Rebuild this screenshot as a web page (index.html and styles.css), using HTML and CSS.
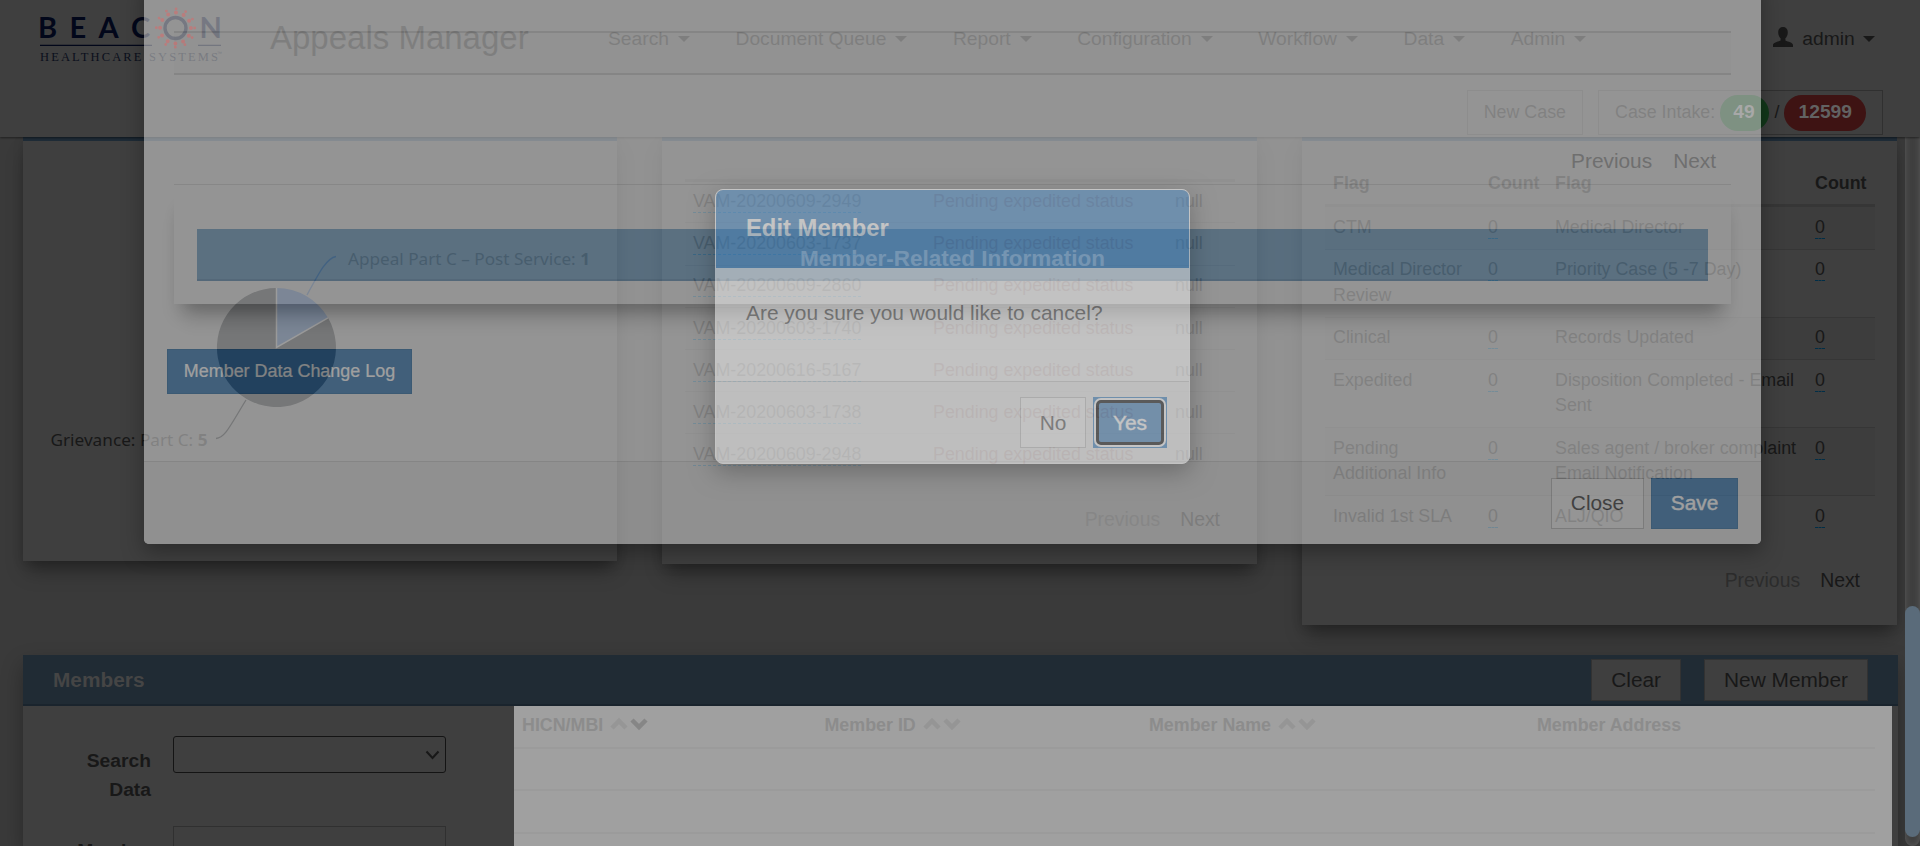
FILE: index.html
```html
<!DOCTYPE html>
<html lang="en">
<head>
<meta charset="utf-8">
<title>Appeals Manager</title>
<link rel="stylesheet" href="styles.css">
</head>
<body>
<div class="page">
  <header class="top">
    <div class="navrow">
      <svg class="logo" width="190" height="60" viewBox="36 4 190 60">
        <g class="logo-word"><text x="38 69.5 98.5 131 199.5" y="38">BEACN</text></g>
        <circle cx="175.5" cy="28" r="10.5" fill="none" stroke="#02071a" stroke-width="3.4"/>
        <g fill="none" stroke="#8a1010" stroke-linecap="round">
          <circle cx="175.5" cy="28" r="15.4" stroke-width="4" stroke-dasharray="0 8.063"/>
          <circle cx="175.5" cy="28" r="19.2" stroke-width="2.8" stroke-dasharray="0 10.053"/>
        </g>
        <path d="M40 45.3H152M198 45.3H221" stroke="#02071a" stroke-width="1.2"/>
        <text class="logo-sub" x="40" y="61" textLength="178">HEALTHCARE SYSTEMS</text>
        <text class="logo-tm" x="217" y="55">™</text>
      </svg>
      <div class="brand">Appeals Manager</div>
      <nav class="menu">
        <a>Search<i class="caret"></i></a><a>Document Queue<i class="caret"></i></a><a>Report<i class="caret"></i></a><a>Configuration<i class="caret"></i></a><a>Workflow<i class="caret"></i></a><a>Data<i class="caret"></i></a><a>Admin<i class="caret"></i></a>
      </nav>
      <a class="user"><svg width="20" height="20" viewBox="0 0 20 20"><path d="M10 0C7 0 5.2 2 5.2 5.300 5.200 8 6.200 10 7.600 11.300V13.500C5 14.800 0 15.500 0 18V20H20V18C20 15.500 15 14.800 12.400 13.500V11.300C13.800 10 14.800 8 14.800 5.300 14.800 2 13 0 10 0Z" fill="#181818"/></svg>admin<i class="caret"></i></a>
    </div>
    <div class="actions">
      <div class="box">New Case</div>
      <div class="box intake">Case Intake: <b class="pill green">49</b> <span>/</span> <b class="pill red">12599</b></div>
    </div>
  </header>

  <main class="cards">
    <section class="card c1">
      <svg width="594" height="400" viewBox="23 141 594 400">
        <path d="M276.500 347.500V288A59.500 59.500 0 0 1 328 317.800Z" fill="#0e2342"/>
        <path d="M276.500 347.500L328 317.800A59.500 59.500 0 1 1 276.500 288Z" fill="#020406"/>
        <path d="M276.500 288V347.500L328 317.800" fill="none" stroke="#4c4c4c" stroke-width="1.500"/>
        <path d="M336 256.500C327 258 320 271 307 295" fill="none" stroke="#0e2342" stroke-width="1.300"/>
        <path d="M216 438.500C225 438 230 426 246 400" fill="none" stroke="#020406" stroke-width="1.300"/>
        <text class="pl" x="348" y="265" textLength="242" lengthAdjust="spacingAndGlyphs">Appeal Part C – Post Service: <tspan font-weight="700">1</tspan></text>
        <text class="pl" x="50.500" y="446" textLength="157" lengthAdjust="spacingAndGlyphs">Grievance: Part C: <tspan font-weight="700">5</tspan></text>
      </svg>
    </section>
    <section class="card c2">
      <table class="cases">
        <tr><td><u>VAM-20200609-2949</u></td><td class="rd">Pending expedited status</td><td>null</td></tr>
        <tr><td><u>VAM-20200603-1737</u></td><td class="rd">Pending expedited status</td><td>null</td></tr>
        <tr><td><u>VAM-20200609-2860</u></td><td class="rd">Pending expedited status</td><td>null</td></tr>
        <tr><td><u>VAM-20200603-1740</u></td><td class="rd">Pending expedited status</td><td>null</td></tr>
        <tr><td><u>VAM-20200616-5167</u></td><td class="rd">Pending expedited status</td><td>null</td></tr>
        <tr><td><u>VAM-20200603-1738</u></td><td class="rd">Pending expedited status</td><td>null</td></tr>
        <tr><td><u>VAM-20200609-2948</u></td><td class="rd">Pending expedited status</td><td>null</td></tr>
      </table>
      <div class="pager"><span class="off">Previous</span><span>Next</span></div>
    </section>
    <section class="card c3">
      <table class="flags">
        <tr><th>Flag</th><th>Count</th><th>Flag</th><th>Count</th></tr>
        <tr><td>CTM</td><td><u>0</u></td><td>Medical Director</td><td><u>0</u></td></tr>
        <tr><td>Medical Director Review</td><td><u>0</u></td><td>Priority Case (5 -7 Day)</td><td><u>0</u></td></tr>
        <tr><td>Clinical</td><td><u>0</u></td><td>Records Updated</td><td><u>0</u></td></tr>
        <tr><td>Expedited</td><td><u>0</u></td><td>Disposition Completed - Email Sent</td><td><u>0</u></td></tr>
        <tr><td>Pending Additional Info</td><td><u>0</u></td><td>Sales agent / broker complaint Email Notification</td><td><u>0</u></td></tr>
        <tr><td>Invalid 1st SLA</td><td><u>0</u></td><td>ALJ/QIO</td><td><u>0</u></td></tr>
      </table>
      <div class="pager"><span class="off">Previous</span><span>Next</span></div>
    </section>
  </main>

  <section class="members">
    <div class="mhead"><h2>Members</h2><div class="btn">Clear</div><div class="btn">New Member</div></div>
    <div class="mbody">
      <div class="form">
        <label>Search Data</label>
        <div class="select"><svg width="15" height="10" viewBox="0 0 15 10"><path d="M1.500 1.500L7.500 8L13.500 1.500" fill="none" stroke="#181818" stroke-width="2"/></svg></div>
        <label>Member</label>
        <div class="input"></div>
      </div>
      <div class="grid">
        <div class="gr gh">
          <b>HICN/MBI <svg width="38" height="16" viewBox="0 0 38 16"><path d="M2 12L9 5L16 12" stroke="#969696"/><path d="M22 4L29 11L36 4" stroke="#868686"/></svg></b>
          <b>Member ID <svg width="38" height="16" viewBox="0 0 38 16"><path d="M2 12L9 5L16 12M22 4L29 11L36 4" stroke="#959595"/></svg></b>
          <b>Member Name <svg width="38" height="16" viewBox="0 0 38 16"><path d="M2 12L9 5L16 12M22 4L29 11L36 4" stroke="#959595"/></svg></b>
          <b>Member Address</b>
        </div>
        <div class="gr"></div><div class="gr"></div><div class="gr"></div>
      </div>
    </div>
  </section>
</div>

<div class="scroll"><div class="thumb"></div></div>

<div class="modal">
  <div class="mhd"></div>
  <div class="pager2"><span>Previous</span><span>Next</span></div>
  <div class="panel"><div class="bar">Member-Related Information</div></div>
  <div class="log">Member Data Change Log</div>
  <footer class="mfoot"><div class="close">Close</div><div class="save">Save</div></footer>
</div>

<div class="dialog">
  <h3>Edit Member</h3>
  <p>Are you sure you would like to cancel?</p>
  <footer><div class="no">No</div><div class="yes"><span>Yes</span></div></footer>
</div>
</body>
</html>
```

FILE: styles.css
```css
* { box-sizing: border-box; }
html, body { height: 846px; overflow: hidden; }
body { margin: 0; position: relative; background: #3a3a3a; color: #181818; font: 17.85px/25.5px "Liberation Sans", Arial, sans-serif; }
.page { height: 846px; overflow: hidden; }

/* Header */
.top { position: relative; z-index: 2; height: 137px; background: #3f3f3f; box-shadow: 0 1px 2px rgba(0,0,0,.45); }
.navrow { display: flex; align-items: center; height: 76px; padding-left: 36px; font-size: 19.25px; }
.logo { margin-top: -8px; flex: none; }
.logo-word { font: 700 29px Lato, sans-serif; fill: #02071a; }
.logo-sub { font: 12.5px "Liberation Serif", serif; fill: #0b0f1c; }
.logo-tm { font: 5px "Liberation Sans", sans-serif; fill: #0b0f1c; }
.brand { width: 338px; padding-left: 44px; font-size: 33px; white-space: nowrap; }
.menu { display: flex; gap: 45.5px; padding: 1px 0 0 44px; white-space: nowrap; flex: none; }
.menu a, .user { display: flex; align-items: center; }
.caret { width: 0; margin: 1px 0 0 9px; border: 6px solid transparent; border-top-color: currentColor; border-bottom: 0; }
.user { margin-left: 187px; padding-top: 1px; }
.user svg { margin: -3px 9px 0 0; }
.user .caret { margin-left: 8px; }
.actions { display: flex; gap: 15px; justify-content: flex-end; padding: 14px 37px 0 0; }
.box { height: 45px; border: 1px solid #303030; padding: 0 16px; line-height: 43px; white-space: nowrap; }
.intake { display: flex; align-items: center; width: 285px; }
.pill { height: 36px; margin-left: 5px; padding: 0 14px; border-radius: 18px; color: #626262; font-size: 19.25px; line-height: 34px; }
.pill + span { margin-left: 6px; }
.green { background: #12381a; width: 49px; color: #666; padding: 0 13px; }
.red { background: #3e1313; width: 82px; }

/* Dashboard cards */
.cards { display: grid; grid-template-columns: 594px 595px 595px; column-gap: 45px; align-items: start; height: 518px; padding-left: 23px; }
.card { background: #3f3f3f; border-top: 4px solid #1e2b36; box-shadow: 0 13px 18px -4px rgba(0,0,0,.35), 0 2px 10px rgba(0,0,0,.12); }
.c1 { height: 424px; }
.c1 svg { display: block; }
.c2 { height: 427px; padding: 38px 22px 0 23px; }
.c3 { height: 488px; padding: 22px 22px 0 23px; }
.pl { font: 16.500px "Noto Sans", sans-serif; fill: #181818; }
table { border-collapse: separate; border-spacing: 0; table-layout: fixed; width: 550px; line-height: 25.75px; }
td, th { padding: 7.75px 8px; border-top: 1px solid #363636; text-align: left; vertical-align: top; white-space: nowrap; }
.cases { border-top: 3px solid #363636; line-height: 25.7px; }
.cases td:nth-child(1) { width: 240px; }
.cases td:nth-child(2) { width: 242px; }
.cases tr:first-child td, .flags th { border-top: 0; }
.cases tr:first-child td { padding-top: 7px; }
.flags tr:nth-child(2) td { border-top: 3px solid #363636; }
.flags tr:nth-child(even) td { background: #3d3d3d; }
.flags th:nth-child(1) { width: 155px; }
.flags th:nth-child(2) { width: 67px; }
.flags th:nth-child(3) { width: 260px; }
.flags td { white-space: normal; }
u { text-decoration: none; padding-bottom: 1px; border-bottom: 1px dashed #002e47; }
.rd { color: #2a1515; }
.pager { display: flex; gap: 20px; justify-content: flex-end; padding: 31px 15px 0 0; font-size: 19.4px; }
.c3 .pager { padding-top: 30.5px; }
.off { color: #2c2c2c; }

/* Members */
.members { position: relative; width: 1875px; margin-left: 23px; background: #3f3f3f; box-shadow: 0 10px 20px rgba(0,0,0,.3); }
.mhead { display: flex; align-items: center; height: 51px; padding: 0 30px; background: #202b34; border-bottom: 2px solid #1a242d; font-size: 20.85px; }
h2 { flex: 1; margin: 0; font-size: 20.85px; color: #454545; }
.btn { height: 42px; line-height: 40px; padding: 0 19px; background: #3f3f3f; border: 1px solid #323232; }
.btn + .btn { margin-left: 23px; }
.mbody { display: flex; height: 140px; }
.form { width: 491px; display: grid; grid-template-columns: 128px 273px; grid-template-rows: 90px 90px; column-gap: 22px; padding-top: 30px; font-size: 19.25px; }
label { font-weight: 700; text-align: right; padding: 10px 0 0 40px; line-height: 29px; }
.select { height: 37px; border: 1px solid #141414; border-radius: 3px; display: flex; align-items: center; justify-content: flex-end; padding-right: 5px; }
.input { height: 37px; border: 1px solid #303030; }
.grid { width: 1378px; background: #a0a0a0; color: #8c8c8c; }
.gr { height: 42.5px; border-bottom: 2px solid #9b9b9b; width: 1361px; }
.gh { display: grid; grid-template-columns: 302.500px 324.500px 388px 1fr; padding: 7px 8px 0; }
.gh svg { fill: none; stroke-width: 4.500; vertical-align: -1px; margin-left: 2px; }

/* Page scroll bar */
.scroll { position: absolute; right: 0; top: 0; width: 15px; height: 846px; border-radius: 8px; background: #3f3f3f; box-shadow: inset 0 0 6px rgba(110,110,110,.6); padding-top: 606px; }
.thumb { height: 231px; border-radius: 8px; background: #5a6b7a; }

/* Member editor */
.modal { position: absolute; z-index: 3; left: 144px; top: -20px; width: 1617px; height: 564px; padding-top: 51px; display: flex; flex-direction: column; background: #e9e9e9; opacity: .5; border-radius: 0 0 5px 5px; box-shadow: 0 8px 20px rgba(0,0,0,.6); font-size: 20.85px; }
.mhd { height: 44px; margin: 0 30px; background: #e4e4e4; border: solid #cacaca; border-width: 2px 0; }
.pager2 { display: flex; gap: 21px; justify-content: flex-end; margin: 0 30px; height: 110px; padding: 73px 15px 0 0; border-bottom: 1px solid #cecece; color: #a0a0a0; }
.panel { height: 119px; margin: 0 30px; padding: 44px 23px 0; box-shadow: 0 16px 18px -9px rgba(0,0,0,.34), 0 24px 22px -8px rgba(0,0,0,.1); }
.bar { height: 52px; background: #77a1c1; border-bottom: 2px solid #6992b3; color: #fff; font-weight: 700; font-size: 22.5px; padding: 17px 0 0 603px; }
.log { width: 245px; height: 45px; margin: 45px 0 0 23px; background: #437fb5; border: 1px solid #3b75a8; color: #fff; font-size: 17.95px; line-height: 43px; text-align: center; -webkit-text-stroke: .2px #fff; }
.mfoot { margin-top: 67px; height: 83px; background: #e0e0e0; border-top: 1px solid #cacaca; border-radius: 0 0 5px 5px; display: flex; gap: 7px; justify-content: flex-end; padding: 16px 23px 0 0; line-height: 48px; text-align: center; }
.close { width: 93px; height: 51px; background: #ebebeb; border: 1px solid #b8b8b8; color: #444; }
.save { width: 87px; height: 51px; background: #437fb5; border: 1px solid #3b75a8; color: #fff; -webkit-text-stroke: .4px #fff; }

/* Confirmation dialog */
.dialog { position: absolute; z-index: 4; left: 715px; top: 189px; width: 475px; height: 275px; background: #fafafa; border: 1px solid #fff; border-radius: 8px; opacity: .45; box-shadow: 0 8px 24px rgba(0,0,0,.55); font-size: 20.9px; }
h3 { height: 78px; margin: 0; padding: 24px 30px 0; border-radius: 7px 7px 0 0; background: #4489c9; color: #fff; font-size: 23.8px; line-height: 28px; }
p { margin: 0; height: 113px; padding: 32px 30px 0; color: #606060; }
.dialog footer { height: 82px; border-top: 1px solid #cfcfcf; border-radius: 0 0 7px 7px; background: #f2f2f2; display: flex; gap: 7px; justify-content: flex-end; padding: 15px 22px 0 0; text-align: center; line-height: 49px; }
.no { width: 66px; height: 51px; background: #fafafa; border: 1px solid #c8c8c8; color: #606060; }
.yes { width: 74px; height: 51px; padding: 3px; background: #4489c9; line-height: 39px; color: #fff; -webkit-text-stroke: .4px #fff; }
.yes span { display: block; height: 45px; border: 3px solid #141414; border-radius: 5px; background: #4d8ac4; box-shadow: 0 0 0 2px #fff; }
```
